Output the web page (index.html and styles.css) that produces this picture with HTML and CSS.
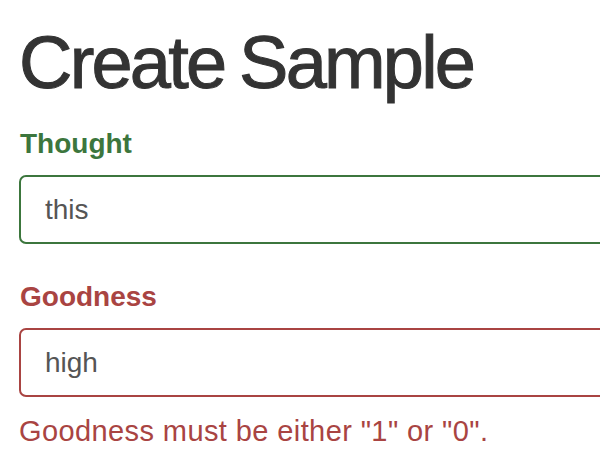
FILE: index.html
```html
<!DOCTYPE html>
<html lang="en">

<head>
    <meta charset="UTF-8">
    <meta name="viewport" content="width=device-width, initial-scale=1.0">
    <title>Create Sample</title>

    <link rel="stylesheet" href="styles.css">
</head>

<body>
    <div class="container">
        <h1 class="page-title">Create Sample</h1>

        <form class="sample-form">
            <div class="form-group has-success">
                <label class="control-label" for="thought">Thought</label>
                <input type="text" id="thought" class="form-control" value="this">
            </div>

            <div class="form-group has-error">
                <label class="control-label" for="goodness">Goodness</label>
                <input type="text" id="goodness" class="form-control" value="high">
                <span class="help-block">Goodness must be either "1" or "0".</span>
            </div>
        </form>
    </div>
</body>

</html>
```

FILE: styles.css
```css
html,
body {
    margin: 0;
    padding: 0;
    background-color: #fff;
    overflow: hidden;
}

body {
    font-family: "Liberation Sans", Arial, sans-serif;
    color: #333;
}

.container {
    width: 660px;
    padding-left: 19px;
}

.page-title {
    font-size: 74px;
    font-weight: normal;
    line-height: 81px;
    letter-spacing: -2.8px;
    word-spacing: -3px;
    -webkit-text-stroke: 1px #333;
    margin: 22px 0 26px;
}

.form-group {
    margin-bottom: 38px;
}

.control-label {
    display: block;
    font-size: 28px;
    font-weight: bold;
    line-height: 30px;
    margin-bottom: 16px;
    padding-left: 1px;
}

.form-control {
    display: block;
    box-sizing: border-box;
    width: 100%;
    height: 69px;
    padding: 0 24px;
    font-family: inherit;
    font-size: 28px;
    color: #555;
    background-color: #fff;
    border: 2px solid #ccc;
    border-radius: 7px;
    outline: none;
}

.help-block {
    display: block;
    margin-top: 19px;
    font-size: 29px;
    line-height: 30px;
    letter-spacing: 0.4px;
}

.has-success .control-label {
    color: #3c763d;
}

.has-success .form-control {
    border-color: #3c763d;
}

.has-error .control-label,
.has-error .help-block {
    color: #a94442;
}

.has-error .form-control {
    border-color: #a94442;
}
```
